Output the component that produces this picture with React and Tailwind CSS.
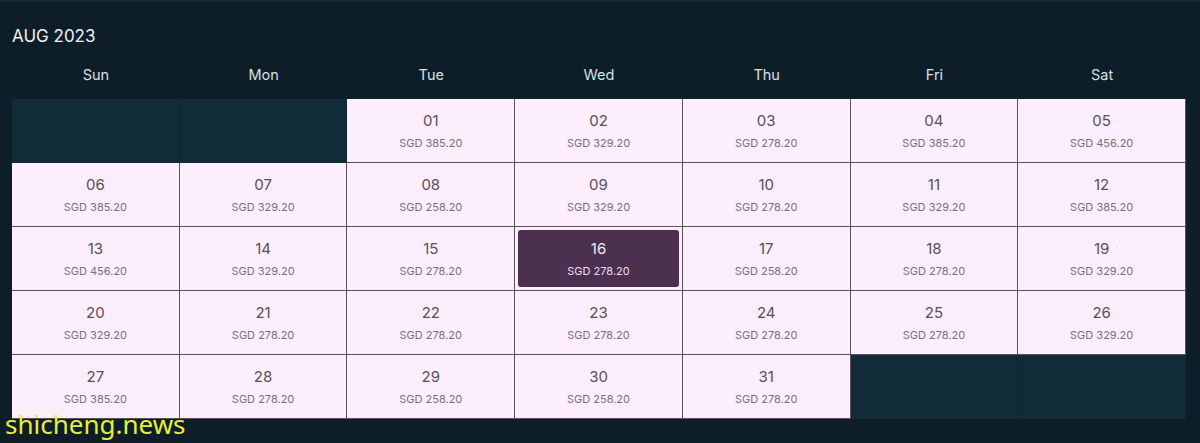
import React from "react";

const DAYS = ["Sun", "Mon", "Tue", "Wed", "Thu", "Fri", "Sat"];

const PRICES = [
  "385.20", "329.20", "278.20", "385.20", "456.20",
  "385.20", "329.20", "258.20", "329.20", "278.20", "329.20", "385.20",
  "456.20", "329.20", "278.20", "278.20", "258.20", "278.20", "329.20",
  "329.20", "278.20", "278.20", "278.20", "278.20", "278.20", "329.20",
  "385.20", "278.20", "258.20", "258.20", "278.20",
];

const SELECTED = 16;

function DayCell({ day, price }) {
  const selected = day === SELECTED;
  return (
    <div className="h-[64px] bg-[#fdeefd] border-r border-b border-[#5c505d] p-[3px]">
      <div
        className={`h-full flex flex-col items-center justify-center rounded-[3px] ${
          selected ? "bg-[#4b3050] text-[#f6eaf6]" : "text-[#5a4d5b]"
        }`}
      >
        <span className="text-[15px] leading-5">{String(day).padStart(2, "0")}</span>
        <span className={`text-[11px] leading-4 mt-[4px] ${selected ? "text-[#efdff0]" : "text-[#7b6d7c]"}`}>
          SGD {price}
        </span>
      </div>
    </div>
  );
}

function EmptyCell() {
  return <div className="h-[64px] bg-[#112b38] border-r border-[#0f2531]" />;
}

export default function App() {
  const cells = [];
  for (let i = 0; i < 2; i++) cells.push(<EmptyCell key={`s${i}`} />);
  PRICES.forEach((p, i) => cells.push(<DayCell key={i} day={i + 1} price={p} />));
  for (let i = 0; i < 2; i++) cells.push(<EmptyCell key={`e${i}`} />);

  return (
    <div
      className="relative w-[1200px] h-[443px] bg-[#0e1e29] border-t-2 border-[#1b2b36] overflow-hidden"
      style={{ fontFamily: "Inter, 'Noto Sans', sans-serif" }}
    >
      <div className="pl-[12px] pr-[14px]">
        <h1 className="pt-[22px] text-[17px] leading-6 text-[#eef2f4]">AUG 2023</h1>
        <div className="grid grid-cols-7 mt-[17px] h-[34px]">
          {DAYS.map((d) => (
            <div key={d} className="text-center text-[14.5px] leading-5 text-[#d8e0e4]">
              {d}
            </div>
          ))}
        </div>
        <div className="grid grid-cols-7">{cells}</div>
      </div>
      <div
        className="absolute left-[5px] bottom-[6px] text-[26px] leading-none text-[#e6ee3a]"
        style={{ fontFamily: "'Noto Sans', sans-serif" }}
      >
        shicheng.news
      </div>
    </div>
  );
}
